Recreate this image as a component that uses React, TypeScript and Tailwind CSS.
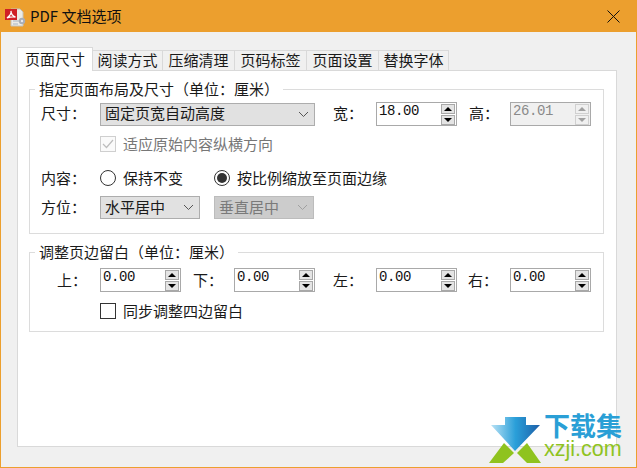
import React from "react";

const CJK = "font-['Noto_Sans_CJK_SC','Liberation_Sans',sans-serif]";

function Chevron({ color = "#555" }: { color?: string }) {
  return (
    <svg width="11" height="7" viewBox="0 0 11 7" fill="none" stroke={color} strokeWidth="1">
      <path d="M1 1 L5.5 5.5 L10 1" />
    </svg>
  );
}

function Combo({ text, width, disabled, textClass = "" }: { text: string; width: string; disabled?: boolean; textClass?: string }) {
  return (
    <div
      className={`flex h-[23px] items-center justify-between border pl-1 pr-[5px] text-[15px] ${width} ${
        disabled ? "border-[#bcbcbc] bg-[#cccccc] text-[#7a7a7a]" : "border-[#adadad] bg-[#e1e1e1] text-[#1a1a1a]"
      }`}
    >
      <span className={textClass}>{text}</span>
      <Chevron color={disabled ? "#a0a0a0" : "#555"} />
    </div>
  );
}

function Spin({ value, disabled }: { value: string; disabled?: boolean }) {
  const btn = disabled ? "bg-[#f0f0f0] border-[#d0d0d0]" : "bg-[#e4e4e4] border-[#a8a8a8]";
  const fill = disabled ? "#a0a0a0" : "#000";
  return (
    <div
      className={`flex h-[24px] w-[81px] items-center justify-between border border-[#a9a9a9] pr-[1px] ${
        disabled ? "bg-[#f0f0f0]" : "bg-white"
      }`}
    >
      <span
        className={`-mt-[6px] pl-[2px] font-['Liberation_Mono',serif] text-[14px] tracking-[-0.4px] ${
          disabled ? "text-[#8a8a8a]" : "text-[#111]"
        }`}
      >
        {value}
      </span>
      <div className="flex flex-col gap-[1px]">
        <div className={`flex h-[10px] w-[14px] items-center justify-center border ${btn}`}>
          <svg width="8" height="4" viewBox="0 0 8 4"><path d="M4 0 L8 4 L0 4 Z" fill={fill} /></svg>
        </div>
        <div className={`flex h-[10px] w-[14px] items-center justify-center border ${btn}`}>
          <svg width="8" height="4" viewBox="0 0 8 4"><path d="M0 0 L8 0 L4 4 Z" fill={fill} /></svg>
        </div>
      </div>
    </div>
  );
}

function Radio({ checked }: { checked?: boolean }) {
  return (
    <div className="flex h-[16px] w-[16px] shrink-0 items-center justify-center rounded-full border border-[#333] bg-white">
      {checked && <div className="h-[10px] w-[10px] rounded-full bg-[#333]" />}
    </div>
  );
}

function Group({ title, height, children }: { title: string; height: string; children: React.ReactNode }) {
  return (
    <fieldset className={`min-w-0 border border-[#dcdcdc] px-0 ${height}`}>
      <legend className="ml-[5px] px-[4px] text-[15px] leading-[20px] text-[#1a1a1a]">{title}</legend>
      {children}
    </fieldset>
  );
}

const tabs = [
  { t: "阅读方式", w: "w-[70px]" },
  { t: "压缩清理", w: "w-[72px]" },
  { t: "页码标签", w: "w-[72px]" },
  { t: "页面设置", w: "w-[72px]" },
  { t: "替换字体", w: "w-[70px]" },
];

export default function App() {
  return (
    <div className={`relative flex h-[468px] w-[637px] flex-col overflow-hidden border border-t-0 border-[#ec9f2e] bg-[#f0f0f0] ${CJK}`}>
      <div className="flex h-[32px] shrink-0 items-center bg-[#ec9f2e] pl-[3px] pr-[16px]">
        <svg width="22" height="22" viewBox="0 0 22 22" className="shrink-0">
          <path d="M7 4 H16 L19 7 V21 H7 Z" fill="#ecebe6" stroke="#c4c2ba" strokeWidth="1" />
          <path d="M9 16 H15 M9 19 H14" stroke="#a8b4c4" strokeWidth="1" />
          <circle cx="18" cy="16" r="3.2" fill="#a9aeb6" />
          <circle cx="18" cy="16" r="1.2" fill="#e8e8ee" />
          <rect x="1" y="4" width="12" height="11" fill="#d01f26" />
          <path d="M3 13 C5.5 11 7.5 8 7 6 C7 8.5 8.5 11 11.5 12 C8.5 11.6 5.5 12 3 13 Z" fill="none" stroke="#fff" strokeWidth="1.3" />
        </svg>
        <span className="ml-[4px] text-[15px] text-[#111]">PDF 文档选项</span>
        <svg width="13" height="13" viewBox="0 0 13 13" className="ml-auto" stroke="#111" strokeWidth="1">
          <path d="M0.5 0.5 L12.5 12.5 M12.5 0.5 L0.5 12.5" />
        </svg>
      </div>

      <div className="flex flex-1 flex-col pb-[20px] pl-[16px] pr-[19px] pt-[15px]">
        <div className="relative z-10 flex h-[23px] items-end text-[15px] text-[#1a1a1a]">
          <div className="z-10 -mb-[1px] flex h-[24px] w-[76px] items-center justify-center border border-b-0 border-[#d9d9d9] bg-white">
            页面尺寸
          </div>
          {tabs.map((x) => (
            <div
              key={x.t}
              className={`flex h-[20px] items-center justify-center border border-b-0 border-l-0 border-[#d9d9d9] bg-[#f0f0f0] ${x.w}`}
            >
              {x.t}
            </div>
          ))}
        </div>

        <div className="flex flex-1 flex-col gap-[8px] border border-[#d9d9d9] bg-white pl-[11px] pr-[12px] pt-[8px] text-[15px] text-[#1a1a1a]">
          <Group title="指定页面布局及尺寸（单位：厘米）" height="h-[155px]">
            <div className="pl-[11px] pt-[3px]">
              <div className="flex items-center">
                <span className="-mt-[2px] w-[59px]">尺寸：</span>
                <Combo text="固定页宽自动高度" width="w-[215px]" textClass="-mt-[2px]" />
                <span className="-mt-[2px] ml-[18px] w-[43px]">宽：</span>
                <Spin value="18.00" />
                <span className="-mt-[2px] ml-[12px] w-[41px]">高：</span>
                <Spin value="26.01" disabled />
              </div>
              <div className="ml-[59px] mt-[10px] flex h-[16px] items-center">
                <div className="flex h-[16px] w-[16px] items-center justify-center border border-[#cfcfcf] bg-[#fafafa]">
                  <svg width="12" height="10" viewBox="0 0 12 10" fill="none" stroke="#bdbdbd" strokeWidth="1.2">
                    <path d="M1 5 L4.5 8.5 L11 1" />
                  </svg>
                </div>
                <span className="ml-[7px] text-[#777]">适应原始内容纵横方向</span>
              </div>
              <div className="mt-[18px] flex h-[16px] items-center">
                <span className="w-[59px]">内容：</span>
                <Radio />
                <span className="ml-[7px] w-[91px]">保持不变</span>
                <Radio checked />
                <span className="ml-[7px]">按比例缩放至页面边缘</span>
              </div>
              <div className="mt-[10px] flex items-center">
                <span className="w-[59px]">方位：</span>
                <Combo text="水平居中" width="w-[100px]" />
                <div className="ml-[14px]">
                  <Combo text="垂直居中" width="w-[100px]" disabled />
                </div>
              </div>
            </div>
          </Group>

          <Group title="调整页边留白（单位：厘米）" height="h-[90px]">
            <div className="pl-[27px] pt-[6px]">
              <div className="flex items-center">
                <span className="w-[43px]">上：</span>
                <Spin value="0.00" />
                <span className="ml-[12px] w-[41px]">下：</span>
                <Spin value="0.00" />
                <span className="ml-[18px] w-[43px]">左：</span>
                <Spin value="0.00" />
                <span className="ml-[11px] w-[42px]">右：</span>
                <Spin value="0.00" />
              </div>
              <div className="ml-[43px] mt-[11px] flex h-[16px] items-center">
                <div className="h-[16px] w-[16px] border border-[#333] bg-white" />
                <span className="ml-[7px]">同步调整四边留白</span>
              </div>
            </div>
          </Group>
        </div>
      </div>

      <div className="absolute left-[488px] top-[412px] z-20 flex items-start">
        <svg width="56" height="52" viewBox="488 412 56 52" className="shrink-0">
          <defs>
            <linearGradient id="dl" x1="0" x2="1" y1="0" y2="0">
              <stop offset="0" stopColor="#b9e2f5" />
              <stop offset="0.5" stopColor="#2a9fd9" />
              <stop offset="1" stopColor="#1d5fa8" />
            </linearGradient>
          </defs>
          <path d="M504 417 H525 V425 H539 L514 451 L490 425 H504 Z" fill="url(#dl)" />
          <path d="M503 443 L513 453 L502 463 L488 463 Z" fill="#8fc31f" />
          <path d="M526 443 L540 463 L526 463 L516 453 Z" fill="#8fc31f" />
        </svg>
        <div className="-ml-[1px] flex flex-col font-['Liberation_Sans',sans-serif]">
          <span className={`h-[25px] text-[26px] font-bold leading-[25px] text-[#2a9fd6] ${CJK}`}>下载集</span>
          <span className="mt-[1px] text-[21.5px] leading-[22px] text-[#8fc31f]">xzji.com</span>
        </div>
      </div>
    </div>
  );
}
